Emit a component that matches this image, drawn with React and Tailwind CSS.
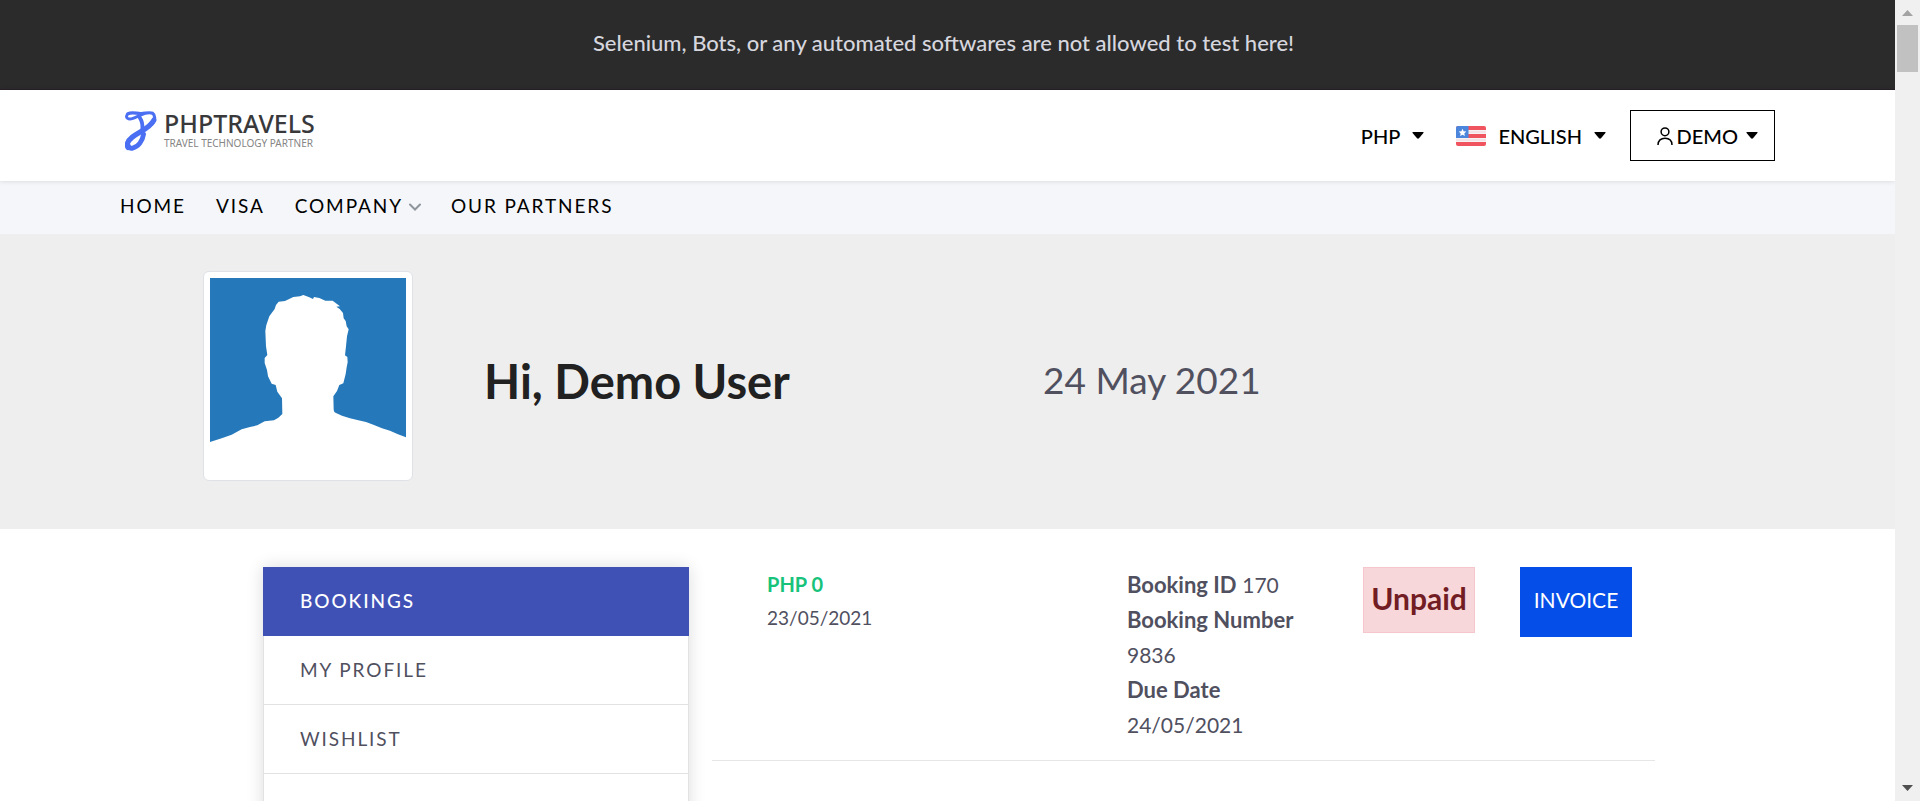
function Caret() {
  return (
    <svg className="h-[7px] w-3 shrink-0" viewBox="0 0 12 7" aria-hidden="true">
      <path d="M1 0h10q1 0 .6.8L7 6.2q-1 .9-2 0L.4.8Q0 0 1 0z" fill="#000" />
    </svg>
  );
}

function LogoMark() {
  return (
    <svg className="h-10 w-8 shrink-0" viewBox="16 16 98 124" fill="none" stroke="#4a6ff3" strokeLinecap="round" strokeLinejoin="round" aria-hidden="true">
      <path d="M24 25C38 17 52 25 66 24 80 23 92 19 101 23 111 30 108 46 99 57" strokeWidth="10" />
      <path d="M23 26C15 38 26 44 40 39 52 35 60 29 74 25" strokeWidth="9" />
      <path d="M61 36C67 45 71 59 69 76" strokeWidth="12" />
      <path d="M105 44C92 70 62 78 38 97 22 110 19 122 25 129" strokeWidth="16" />
      <path d="M73 88C70 108 57 127 39 131 32 133 27 129 26 124" strokeWidth="15" />
    </svg>
  );
}

function Flag() {
  return (
    <svg className="h-5 w-[30px] shrink-0" viewBox="0 0 30 20" role="img" aria-label="United States">
      <clipPath id="flag-round">
        <rect width="30" height="20" rx="2" />
      </clipPath>
      <g clipPath="url(#flag-round)">
        <rect width="30" height="20" fill="#f0545f" />
        <path d="M0 4h30v4H0zM0 12h30v4H0z" fill="#f7f3f5" />
        <path d="M0 5.500h30v1H0zM0 13.500h30v1H0z" fill="#f3d5da" />
        <rect width="12.500" height="12" fill="#4b86dc" />
        <path d="M6.500 2.800l1.100 2.500 2.700.3-2 1.800.6 2.700-2.400-1.400-2.400 1.400.6-2.700-2-1.800 2.700-.3z" fill="#fff" />
      </g>
    </svg>
  );
}

function Avatar() {
  return (
    <svg className="aspect-square w-full" viewBox="60 57 588 588" role="img" aria-label="Profile picture">
      <rect x="60" y="57" width="588" height="588" fill="#fff" />
      <path
        fill="#2579bb"
        d="M60 57H648V535L622 525 600 515 576 508 550 497 528 489 505 484 480 478 456 470 438 462Q431 459 431 452L430 412 441 396 448 378 460 373 467 345 470 325 473 310 472 294 465 289 468 262 471 232 476 211 470 202 467 186 461 178 459 162 449 150 439 143 450 142 428 125 406 125 388 117 372 114 369 120 358 115 340 108 330 112 310 114 285 126 266 128 258 138 254 150 238 172 229 198 226 216 228 262 232 288 224 297 224 312 231 333 234 352 245 374 257 378 262 398 276 418 277 465 265 476 252 484 224 487 202 499 180 504 155 511 125 527 95 538 60 549Z"
      />
    </svg>
  );
}

function Scrollbar() {
  return (
    <div className="flex w-[25px] shrink-0 flex-col items-center bg-[#f0f0f0]" aria-hidden="true">
      <svg className="mt-[10px] h-[6px] w-[11px]" viewBox="0 0 11 6"><path d="M5.500 0L11 6H0z" fill="#a3a3a3" /></svg>
      <div className="mt-[9px] h-[47px] w-[21px] bg-[#c1c1c1]" />
      <svg className="mt-auto mb-[10px] h-[6px] w-[11px]" viewBox="0 0 11 6"><path d="M0 0h11L5.500 6z" fill="#505050" /></svg>
    </div>
  );
}

function Detail({ label, value, stacked }) {
  return (
    <p>
      <strong>{label}</strong>
      {stacked ? <br /> : " "}
      <span className="text-[21px] leading-none">{value}</span>
    </p>
  );
}

const sideLink = "flex h-[69px] items-center border-x border-b border-[#e2e2e2] px-9 text-[19px] tracking-widest text-[#50505f]";

export default function App() {
  return (
    <div className="flex h-screen overflow-hidden bg-white font-['Lato',sans-serif] text-[#50505f]">
      <div className="min-w-0 flex-1 overflow-hidden">
        <div className="flex h-[90px] items-center justify-center border-b border-[#2a1f29] bg-[#2b2b2b] pr-2 pb-1 text-[22px] font-medium text-[#d6d6de]">
          Selenium, Bots, or any automated softwares are not allowed to test here!
        </div>

        <header className="relative flex h-[91px] items-center justify-between bg-white px-[120px] shadow-[0_0_5px_rgba(0,0,0,0.14)]">
          <a href="#" className="flex items-center gap-[7px] pb-[10px] pl-[5px]">
            <LogoMark />
            <span className="flex flex-col gap-1 font-['Noto_Sans',sans-serif]">
              <span className="text-[25px] leading-5 font-medium text-[#39393b]">PHPTRAVELS</span>
              <span className="text-[10px] leading-3 text-[#858585]">TRAVEL TECHNOLOGY PARTNER</span>
            </span>
          </a>
          <div className="flex items-center gap-8 text-xl font-medium text-black">
            <button type="button" className="flex items-center gap-3">PHP <Caret /></button>
            <button type="button" className="flex items-center gap-3"><Flag /> ENGLISH <Caret /></button>
            <button type="button" className="-ml-2 flex h-[51px] w-[145px] items-center justify-end gap-2 border border-black pr-4">
              <span className="flex items-center gap-1">
                <svg className="h-[18px] w-4 shrink-0" viewBox="0 0 16 18" fill="none" stroke="#000" strokeWidth="1.500" aria-hidden="true">
                  <circle cx="8" cy="4.800" r="3.900" />
                  <path d="M1 18c0-4.500 3-6.800 7-6.800s7 2.300 7 6.800" />
                </svg>
                DEMO
              </span>
              <Caret />
            </button>
          </div>
        </header>

        <nav className="flex h-[53px] items-center gap-[30px] bg-[#f4f6f9] px-[120px] pb-[2px] text-[19px] tracking-widest text-black">
          <a href="#">HOME</a>
          <a href="#">VISA</a>
          <a href="#" className="flex items-center gap-[6px]">
            COMPANY
            <svg className="h-2 w-3" viewBox="0 0 12 8" fill="none" stroke="#8e959c" strokeWidth="2" strokeLinecap="round" aria-hidden="true"><path d="M1 1.500l5 5 5-5" /></svg>
          </a>
          <a href="#">OUR PARTNERS</a>
        </nav>

        <section className="flex h-[295px] items-center bg-[#eeeeee] px-[203px] pb-1">
          <div className="mb-11 w-[210px] shrink-0 self-end rounded-md border border-[#dee2e6] bg-white p-[6px]">
            <Avatar />
          </div>
          <h1 className="w-[630px] shrink-0 pt-1 pl-[71px] text-[47px] font-bold text-[#212121]">Hi, Demo User</h1>
          <p className="text-[37px]">24 May 2021</p>
        </section>

        <main className="flex gap-[23px] pt-[38px] pr-[240px] pl-[263px]">
          <aside className="w-[426px] shrink-0 shadow-[0_0_16px_rgba(0,0,0,0.14)]">
            <a href="#" className="flex h-[69px] items-center bg-[#3f51b5] px-[37px] text-[19px] font-medium tracking-widest text-white">BOOKINGS</a>
            <a href="#" className={sideLink}>MY PROFILE</a>
            <a href="#" className={sideLink}>WISHLIST</a>
            <div className="h-[69px] border-x border-b border-[#e2e2e2]" />
          </aside>
          <article className="flex h-[194px] flex-1 items-start border-b border-[#e6e6e6] pr-[23px] pl-[55px] text-xl">
            <div className="flex-1 leading-[34px]">
              <p className="font-bold text-[#17c37b]">PHP 0</p>
              <p className="text-[19px]">23/05/2021</p>
            </div>
            <div className="w-[236px] text-[22px] leading-[35px]">
              <Detail label="Booking ID" value="170" />
              <Detail label="Booking Number" value="9836" stacked />
              <Detail label="Due Date" value="24/05/2021" stacked />
            </div>
            <div className="flex h-[66px] w-28 items-center justify-center border border-[#f5c6cb] bg-[#f8d7da] pb-1 text-3xl font-bold text-[#721c24]">Unpaid</div>
            <a href="#" className="ml-[45px] flex h-[70px] w-28 items-center justify-center bg-[#064ee8] pb-1 text-[21px] text-white">INVOICE</a>
          </article>
        </main>
      </div>
      <Scrollbar />
    </div>
  );
}
